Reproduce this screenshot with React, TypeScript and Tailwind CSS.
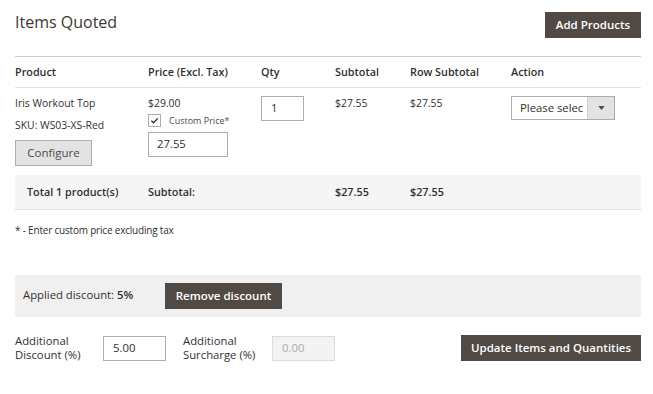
// Quote items grid, Magento admin style

const font = { fontFamily: '"Open Sans", "Liberation Sans", sans-serif' };

function DarkButton({ label, className = "" }: { label: string; className?: string }) {
  return (
    <button
      type="button"
      className={`h-[26px] bg-[#514943] text-white text-[11.5px] font-semibold leading-none whitespace-nowrap ${className}`}
    >
      {label}
    </button>
  );
}

function Checkbox() {
  return (
    <span className="flex h-[13px] w-[13px] items-center justify-center border border-[#adadad] bg-white">
      <svg viewBox="0 0 10 10" className="h-[9px] w-[9px]">
        <path d="M1.5 5.2 L4 7.5 L8.6 2.6" fill="none" stroke="#303030" strokeWidth="1.5" />
      </svg>
    </span>
  );
}

export default function App() {
  return (
    <div style={font} className="w-[653px] h-[394px] bg-white pl-[15px] pr-[12px] pt-[12px] text-[#303030] text-[10.4px]">
      {/* Header */}
      <div className="flex items-start justify-between h-[44px]">
        <h1 className="text-[16px] font-normal text-[#41362f] leading-[22px] -mt-[1px]">Items Quoted</h1>
        <DarkButton label="Add Products" className="w-[96px]" />
      </div>

      {/* Table */}
      <table className="w-full border-collapse table-fixed">
        <colgroup>
          <col className="w-[133px]" />
          <col className="w-[113px]" />
          <col className="w-[74px]" />
          <col className="w-[75px]" />
          <col className="w-[101px]" />
          <col />
        </colgroup>
        <thead>
          <tr className="border-t border-[#cccccc] border-b border-b-[#e3e3e3] h-[31px] text-left">
            {["Product", "Price (Excl. Tax)", "Qty", "Subtotal", "Row Subtotal", "Action"].map((h) => (
              <th key={h} className="font-semibold text-[10.8px] p-0 align-middle">
                {h}
              </th>
            ))}
          </tr>
        </thead>
        <tbody>
          <tr className="align-top">
            <td className="p-0 pt-[8px] pb-[9px]">
              <div className="leading-[15px]">Iris Workout Top</div>
              <div className="leading-[15px] mt-[7px]">SKU: WS03-XS-Red</div>
              <button
                type="button"
                className="mt-[7px] h-[26px] w-[77px] border border-[#adadad] bg-[#e3e3e3] text-[#514943] text-[11.5px]"
              >
                Configure
              </button>
            </td>
            <td className="p-0 pt-[8px]">
              <div className="leading-[14px]">$29.00</div>
              <div className="flex items-center gap-[8px] mt-[4px]">
                <Checkbox />
                <span className="text-[9px] text-[#514943]">Custom Price*</span>
              </div>
              <div className="mt-[4px] h-[25px] w-[80px] border border-[#adadad] flex items-center pl-[8px] text-[11.3px]">
                27.55
              </div>
            </td>
            <td className="p-0 pt-[8px]">
              <div className="h-[25px] w-[43px] border border-[#adadad] flex items-center pl-[9px] text-[11.3px]">
                1
              </div>
            </td>
            <td className="p-0 pt-[8px] leading-[14px]">$27.55</td>
            <td className="p-0 pt-[8px] leading-[14px]">$27.55</td>
            <td className="p-0 pt-[8px]">
              <div className="flex h-[24px] w-[104px] border border-[#adadad]">
                <span className="flex-1 flex items-center pl-[8px] overflow-hidden whitespace-nowrap text-[11.3px]">
                  Please selec
                </span>
                <span className="w-[27px] bg-[#e3e3e3] border-l border-[#cfcfcf] flex items-center justify-center">
                  <svg viewBox="0 0 8 5" className="w-[7px] h-[4px]">
                    <path d="M0 0 H8 L4 5 Z" fill="#514943" />
                  </svg>
                </span>
              </div>
            </td>
          </tr>
          <tr className="bg-[#f5f5f5] border-b border-[#e3e3e3] h-[34px] font-semibold text-[10.8px]">
            <td className="p-0 pl-[12px]">Total 1 product(s)</td>
            <td className="p-0" colSpan={2}>
              Subtotal:
            </td>
            <td className="p-0">$27.55</td>
            <td className="p-0">$27.55</td>
            <td className="p-0" />
          </tr>
        </tbody>
      </table>

      <p className="mt-[13px] text-[10px] tracking-[-0.2px]">* - Enter custom price excluding tax</p>

      {/* Applied discount */}
      <div className="mt-[37px] h-[42px] bg-[#f0f0f0] flex items-center pl-[8px]">
        <span className="w-[142px] text-[11.3px]">
          Applied discount: <b className="font-semibold">5%</b>
        </span>
        <DarkButton label="Remove discount" className="w-[117px]" />
      </div>

      {/* Additional discount / surcharge */}
      <div className="mt-[17px] flex items-center">
        <label className="w-[88px] leading-[14.5px] text-[11.3px]">
          Additional
          <br />
          Discount (%)
        </label>
        <div className="h-[25px] w-[63px] border border-[#adadad] flex items-center pl-[9px] text-[11.3px]">5.00</div>
        <label className="ml-[17px] w-[89px] leading-[14.5px] text-[11.3px]">
          Additional
          <br />
          Surcharge (%)
        </label>
        <div className="h-[25px] w-[63px] border border-[#dcdcdc] bg-[#f3f3f3] flex items-center pl-[9px] text-[11.3px] text-[#a9a9a9]">
          0.00
        </div>
        <DarkButton label="Update Items and Quantities" className="ml-auto w-[180px]" />
      </div>
    </div>
  );
}
